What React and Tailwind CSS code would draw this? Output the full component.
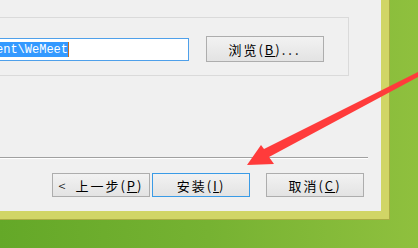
import React from 'react';

const cjk = { fontFamily: '"Noto Sans CJK SC", "Liberation Sans", sans-serif' };

function Btn({ children, className = '' }) {
  return (
    <button
      className={
        'h-[24px] w-[98px] flex items-center justify-center text-[13px] tracking-[2px] leading-none text-black bg-gradient-to-b from-[#f2f2f2] to-[#e3e3e3] border ' +
        className
      }
      style={cjk}
    >
      {children}
    </button>
  );
}

export default function App() {
  return (
    <div className="relative w-[418px] h-[248px] overflow-hidden bg-gradient-to-r from-[#64a828] via-[#76b232] to-[#8fc03e]">
      {/* dialog with yellow frame */}
      <div className="w-[390px] h-[220px] border-r border-b border-[#a9ad44]">
        <div className="w-[389px] h-[219px] border-r-8 border-b-8 border-[#d1d566] bg-[#f0f0f0] flex flex-col">
          {/* group box */}
          <div className="mt-[17px] w-[349px] h-[59px] border border-l-0 border-[#dadada] flex items-start pt-[18px]">
            <div className="mt-[2px] w-[189px] h-[23px] border border-l-0 border-[#4fa0ea] bg-white overflow-hidden flex items-center">
              <span className="flex items-center h-[15px] bg-[#3399ff] text-white text-[12px] leading-none overflow-hidden w-[68px]" style={{ fontFamily: '"Liberation Mono", monospace' }}>
                <span className="-ml-[4px] whitespace-nowrap">ent\WeMeet</span>
              </span>
              <span className="w-px h-[15px] bg-[#c86a1c]"></span>
            </div>
            <button
              className="ml-[17px] w-[118px] h-[26px] flex items-center justify-center text-[13px] tracking-[2px] leading-none text-black bg-gradient-to-b from-[#f2f2f2] to-[#e3e3e3] border border-[#adadad]"
              style={cjk}
            >
              浏览(<u>B</u>)<span className="tracking-[3px]">...</span>
            </button>
          </div>

          {/* separator */}
          <div className="mt-[81px] w-[368px] h-[2px] border-t border-[#a0a0a0] border-b border-b-white"></div>

          {/* buttons */}
          <div className="mt-[14px] flex items-start pl-[52px]">
            <Btn className="border-[#adadad]">
              <span className="mr-[8px] font-light">&lt;</span>上一步(<u>P</u>)
            </Btn>
            <Btn className="ml-[2px] border-[#3a9be6]">
              安装(<u>I</u>)
            </Btn>
            <Btn className="ml-[16px] border-[#adadad]">
              取消(<u>C</u>)
            </Btn>
          </div>
        </div>
      </div>

      {/* red arrow annotation */}
      <svg className="absolute left-0 top-0" width="418" height="248" viewBox="0 0 418 248">
        <polygon
          points="420,71 264,149 261,145 247,165 274,164 269,157 420,76"
          fill="#ff3b3b"
        />
      </svg>
    </div>
  );
}
